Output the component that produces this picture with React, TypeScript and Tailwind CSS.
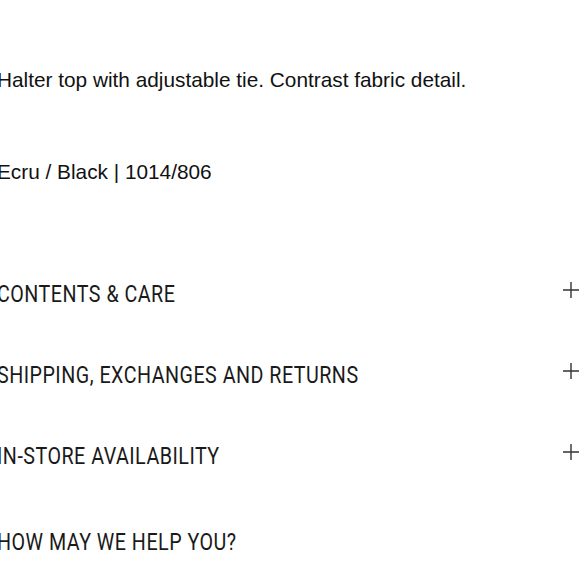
import React from 'react';

const sections = [
    'CONTENTS & CARE',
    'SHIPPING, EXCHANGES AND RETURNS',
    'IN-STORE AVAILABILITY',
];

const PlusIcon: React.FC = () => (
    <svg width="16" height="16" viewBox="0 0 16 16" className="mb-2 mr-[1px] text-[#333]">
        <path d="M8 0v16M0 8h16" stroke="currentColor" strokeWidth="1.4" fill="none" />
    </svg>
);

const Heading: React.FC<{ label: string }> = ({ label }) => (
    <span className="inline-block origin-left scale-x-[0.82] whitespace-nowrap font-['Roboto',sans-serif] text-[24px] font-normal leading-none tracking-[0.6px] text-[#1a1a1a]">
        {label}
    </span>
);

export default function App() {
    return (
        <div className="h-[580px] w-[580px] overflow-hidden bg-white font-['Liberation_Sans',Arial,sans-serif] text-[#111]">
            <div className="-ml-[3px]">
                <p className="pt-[69px] text-[20.8px] leading-[22px]">
                    Halter top with adjustable tie. Contrast fabric detail.
                </p>
                <p className="pt-[70px] text-[20.8px] leading-[22px]">
                    Ecru / Black | 1014/806
                </p>
                <div className="mt-[99px] flex flex-col gap-[57px]">
                    {sections.map((s) => (
                        <div key={s} className="flex items-center justify-between">
                            <Heading label={s} />
                            <PlusIcon />
                        </div>
                    ))}
                </div>
                <div className="mt-[62px]">
                    <Heading label="HOW MAY WE HELP YOU?" />
                </div>
            </div>
        </div>
    );
}
